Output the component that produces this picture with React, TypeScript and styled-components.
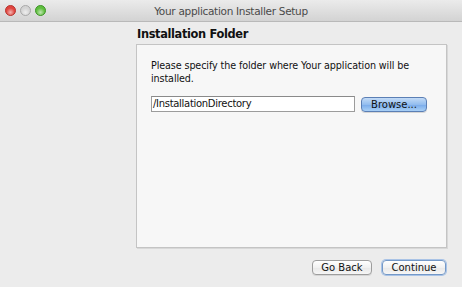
import React from 'react'
import styled, { createGlobalStyle } from 'styled-components'

const GlobalStyle = createGlobalStyle`
  html, body {
    margin: 0;
    padding: 0;
    background: #ececec;
  }
  body {
    font-family: 'DejaVu Sans', 'Liberation Sans', sans-serif;
    -webkit-font-smoothing: antialiased;
  }
`

const Window = styled.div`
  width: 462px;
  height: 287px;
  display: flex;
  flex-direction: column;
  background: #ececec;
  overflow: hidden;
`

const TitleBar = styled.div`
  position: relative;
  height: 22px;
  flex: none;
  display: flex;
  align-items: center;
  justify-content: center;
  background: linear-gradient(#ebebeb, #d3d3d3);
  border-bottom: 1px solid #b9b9b9;
  box-sizing: border-box;
`

const Lights = styled.div`
  position: absolute;
  left: 5px;
  top: 5px;
  display: flex;
  gap: 4px;
`

const Light = styled.span<{ $color: string; $edge: string }>`
  width: 11px;
  height: 11px;
  border-radius: 50%;
  box-sizing: border-box;
  border: 1px solid ${(p) => p.$edge};
  background: radial-gradient(circle at 50% 70%, #ffffff99 0, transparent 55%),
    ${(p) => p.$color};
`

const Title = styled.div`
  font-size: 10.5px;
  color: #4a4a4a;
  letter-spacing: -0.3px;
`

const Body = styled.div`
  flex: 1;
  display: flex;
  padding-left: 136px;
`

const Content = styled.div`
  width: 311px;
  display: flex;
  flex-direction: column;
`

const Heading = styled.h1`
  margin: 3px 0 1px 1px;
  height: 18px;
  font-size: 11.4px;
  font-weight: bold;
  color: #111;
  line-height: 18px;
  letter-spacing: -0.35px;
`

const Panel = styled.section`
  height: 204px;
  box-sizing: border-box;
  background: #f7f7f7;
  border: 1px solid #c4c4c4;
  box-shadow: 1px 1px 0 #d8d8d8;
  padding: 14px 8px 0 14px;
`

const Message = styled.p`
  margin: 0;
  font-size: 9.6px;
  line-height: 13px;
  color: #111;
  letter-spacing: -0.1px;
`

const FolderRow = styled.div`
  display: flex;
  align-items: center;
  gap: 6px;
  margin-top: 11px;
`

const PathInput = styled.div`
  width: 204px;
  height: 16px;
  box-sizing: border-box;
  background: #fff;
  border: 1px solid #9c9c9c;
  border-top-color: #8a8a8a;
  font-size: 10px;
  line-height: 14px;
  padding-left: 1px;
  color: #111;
  letter-spacing: -0.3px;
`

const Button = styled.button<{ $variant?: 'primary' | 'focus' }>`
  height: 15px;
  box-sizing: border-box;
  padding: 0;
  font-family: 'DejaVu Sans', 'Liberation Sans', sans-serif;
  font-size: 10px;
  line-height: 13px;
  color: #111;
  border-radius: 4px;
  border: 1px solid
    ${(p) =>
      p.$variant === 'primary'
        ? '#5b7fb5'
        : p.$variant === 'focus'
        ? '#7499c8'
        : '#9d9d9d'};
  background: ${(p) =>
    p.$variant === 'primary'
      ? 'linear-gradient(#c3dbf6 0%, #93bdef 50%, #78aaea 51%, #a9d0f6 100%)'
      : 'linear-gradient(#ffffff, #f1f1f1 50%, #e8e8e8 51%, #f6f6f6)'};
  box-shadow: ${(p) =>
    p.$variant === 'focus' ? '0 0 0 1px #a9c3e6' : '0 1px 0 #d6d6d6'};
`

const BrowseButton = styled(Button)`
  width: 66px;
`

const Footer = styled.div`
  display: flex;
  justify-content: flex-end;
  gap: 10px;
  margin-top: 12px;
  padding-right: 1px;
`

const FooterButton = styled(Button)<{ $w: number }>`
  width: ${(p) => p.$w}px;
`

export default function App() {
  return (
    <>
      <GlobalStyle />
      <Window>
        <TitleBar>
          <Lights>
            <Light $color="#e0443e" $edge="#b6352f" />
            <Light $color="#d4d4d4" $edge="#a9a9a9" />
            <Light $color="#5fbe3e" $edge="#3f9429" />
          </Lights>
          <Title>Your application Installer Setup</Title>
        </TitleBar>
        <Body>
          <Content>
            <Heading>Installation Folder</Heading>
            <Panel>
              <Message>
                Please specify the folder where Your application will be
                installed.
              </Message>
              <FolderRow>
                <PathInput>/InstallationDirectory</PathInput>
                <BrowseButton $variant="primary">Browse...</BrowseButton>
              </FolderRow>
            </Panel>
            <Footer>
              <FooterButton $w={60}>Go Back</FooterButton>
              <FooterButton $w={64} $variant="focus">
                Continue
              </FooterButton>
            </Footer>
          </Content>
        </Body>
      </Window>
    </>
  )
}
